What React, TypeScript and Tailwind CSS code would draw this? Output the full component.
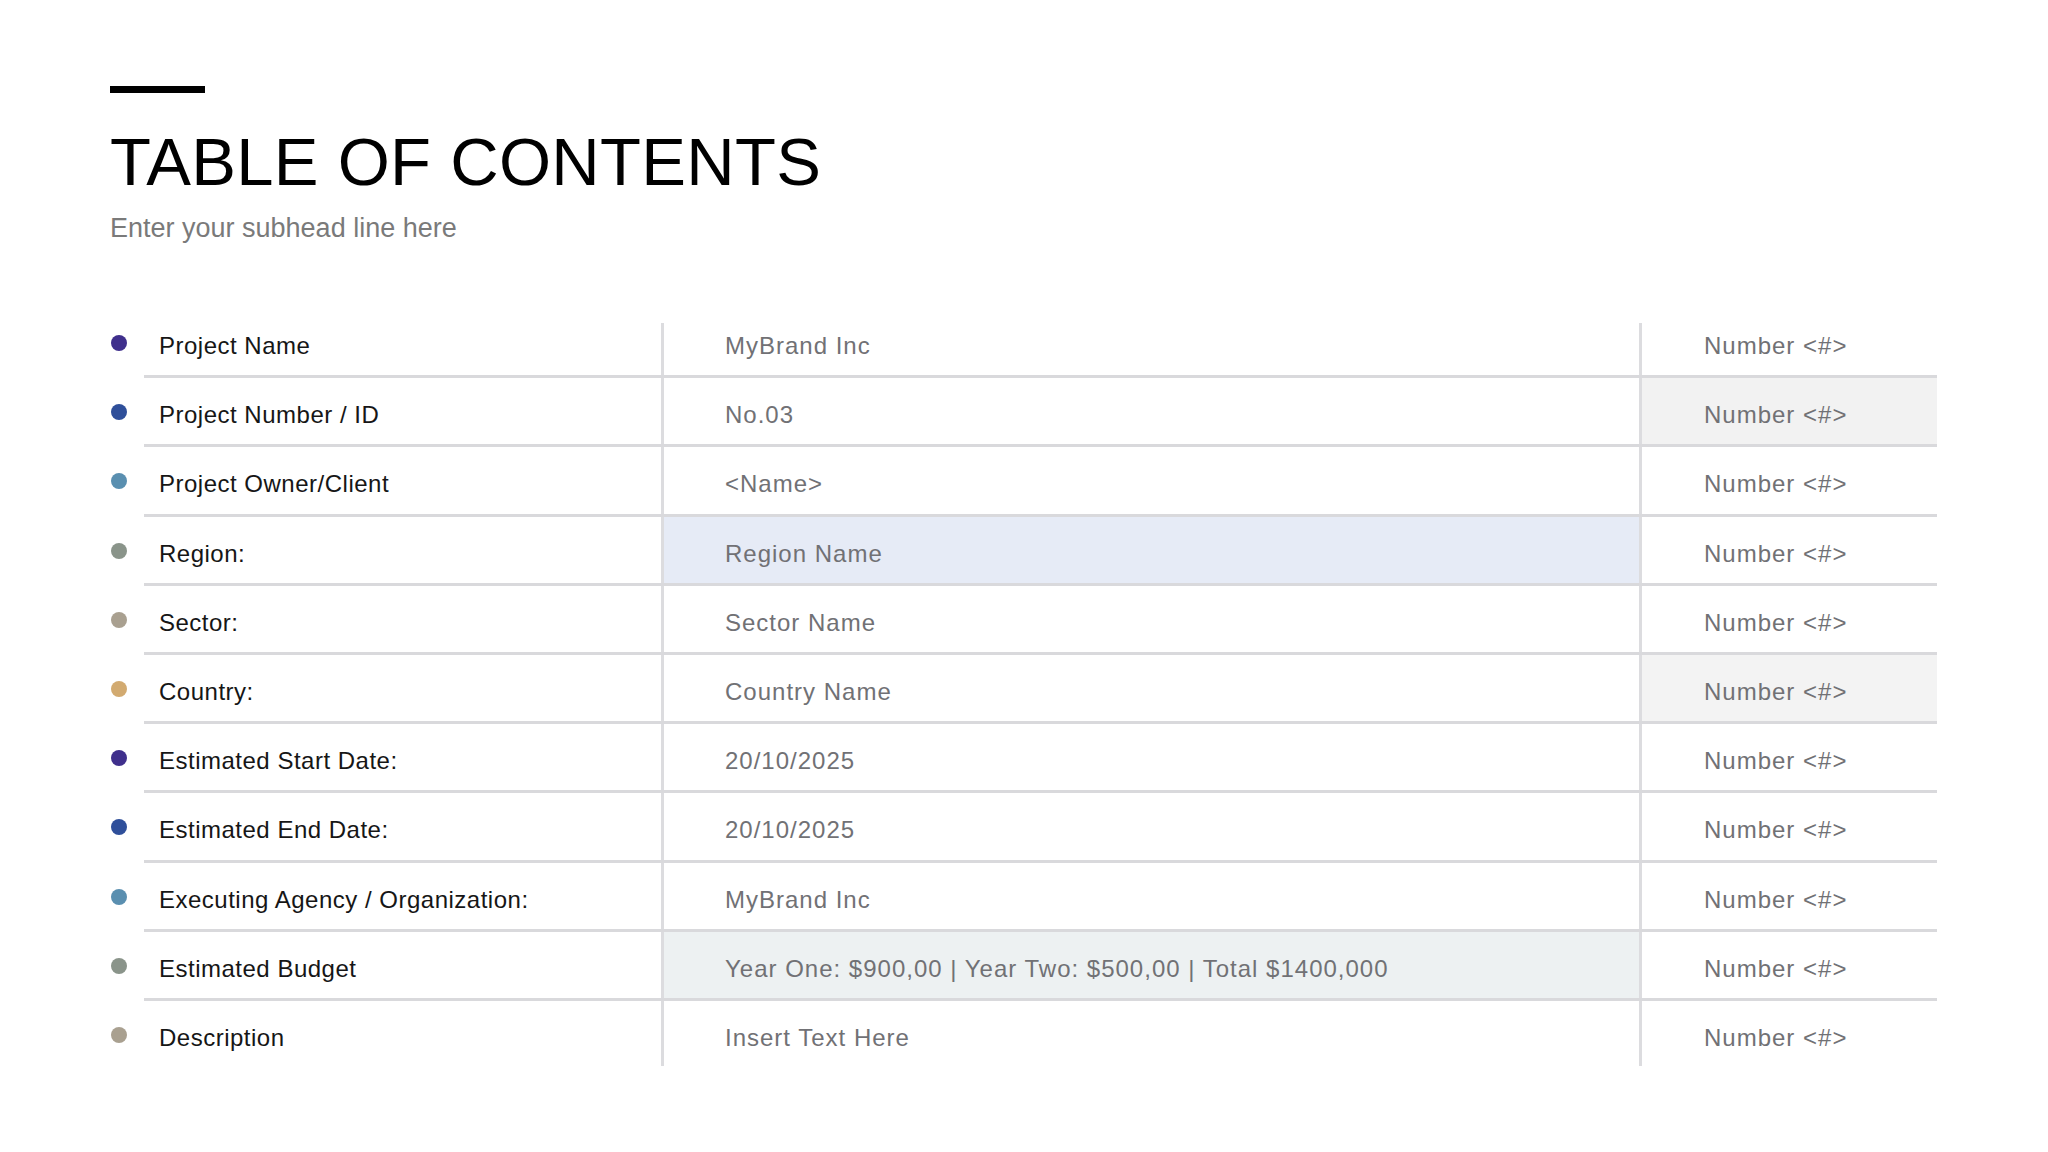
import React from "react"

const rows = [
  { label: "Project Name", value: "MyBrand Inc", dot: "bg-[#3f2f8c]", mid: "", right: "" },
  { label: "Project Number / ID", value: "No.03", dot: "bg-[#2f4f9a]", mid: "", right: "bg-[#f2f2f2]" },
  { label: "Project Owner/Client", value: "<Name>", dot: "bg-[#5a8fb0]", mid: "", right: "" },
  { label: "Region:", value: "Region Name", dot: "bg-[#8a948a]", mid: "bg-[#e6ebf6]", right: "" },
  { label: "Sector:", value: "Sector Name", dot: "bg-[#a9a090]", mid: "", right: "" },
  { label: "Country:", value: "Country Name", dot: "bg-[#d2aa70]", mid: "", right: "bg-[#f3f3f3]" },
  { label: "Estimated Start Date:", value: "20/10/2025", dot: "bg-[#3f2f8c]", mid: "", right: "" },
  { label: "Estimated End Date:", value: "20/10/2025", dot: "bg-[#2f4f9a]", mid: "", right: "" },
  { label: "Executing Agency / Organization:", value: "MyBrand Inc", dot: "bg-[#5a8fb0]", mid: "", right: "" },
  {
    label: "Estimated Budget",
    value: "Year One: $900,00 | Year Two: $500,00 | Total $1400,000",
    dot: "bg-[#8a948a]",
    mid: "bg-[#edf1f2]",
    right: "",
  },
  { label: "Description", value: "Insert Text Here", dot: "bg-[#a9a090]", mid: "", right: "" },
]

function Divider({ first, last }: { first: boolean; last: boolean }) {
  // first row's rule starts a bit lower, last row's ends a bit early
  const cls = first ? "mt-[14px]" : last ? "mb-1" : ""
  return <div className={`w-[3px] shrink-0 self-stretch bg-[#dcdcdf] ${cls}`} />
}

function Row({ row, index }: { row: (typeof rows)[number]; index: number }) {
  const first = index === 0
  const last = index === rows.length - 1
  return (
    <div className="flex h-[69.2px]">
      <div className="w-[34px] shrink-0 pt-[26px] pl-px">
        <div className={`h-4 w-4 rounded-full ${row.dot}`} />
      </div>
      <div
        className={`flex flex-1 ${last ? "" : "border-b-[3px] border-[#d9d9dc]"}`}
      >
        <div className="w-[517px] shrink-0 pl-[15px] pt-[25px] text-[24px] leading-none tracking-[0.5px] text-[#161616]">
          {row.label}
        </div>
        <Divider first={first} last={last} />
        <div className={`w-[975px] shrink-0 pl-[61px] pt-[25px] text-[24px] leading-none tracking-[1px] text-[#717175] ${row.mid}`}>
          {row.value}
        </div>
        <Divider first={first} last={last} />
        <div className={`flex-1 pl-[62px] pt-[25px] text-[24px] leading-none tracking-[1px] text-[#717175] ${row.right}`}>
          Number &lt;#&gt;
        </div>
      </div>
    </div>
  )
}

export default function App() {
  return (
    <div
      className="h-[1152px] w-[2048px] overflow-hidden bg-white pl-[110px] pr-[111px] pt-[86px]"
      style={{ fontFamily: '"Liberation Sans", Arial, sans-serif' }}
    >
      <div className="h-[7px] w-[95px] bg-black" />
      <h1 className="mt-[35px] text-[67px] font-normal leading-none tracking-[0.3px] text-black">TABLE OF CONTENTS</h1>
      <p className="mt-[20px] text-[27px] leading-none text-[#7a7a7a]">Enter your subhead line here</p>

      <div className="mt-[67px]">
        {rows.map((row, i) => (
          <Row key={i} row={row} index={i} />
        ))}
      </div>
    </div>
  )
}
